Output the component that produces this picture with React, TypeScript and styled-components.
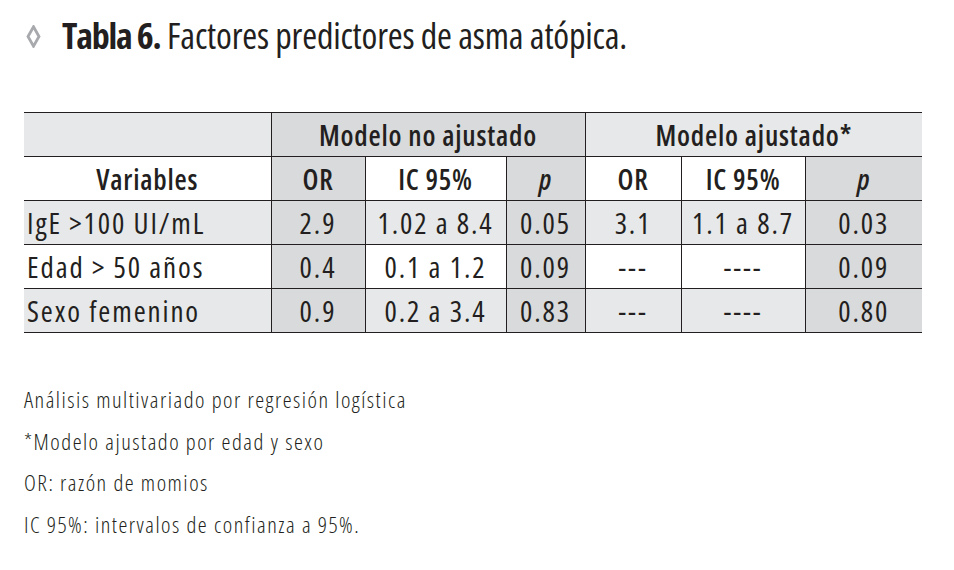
import React from "react";
import styled, { createGlobalStyle } from "styled-components";

const GlobalStyle = createGlobalStyle`
  html, body {
    margin: 0;
    padding: 0;
    background: #ffffff;
  }
  body {
    font-family: "Open Sans", "DejaVu Sans Condensed", sans-serif;
    font-stretch: 75%;
    color: #231f20;
  }
`;

const Page = styled.div`
  width: 954px;
  height: 570px;
  box-sizing: border-box;
  padding-top: 16px;
  display: flex;
  flex-direction: column;
  overflow: hidden;
`;

const TitleRow = styled.div`
  display: flex;
  align-items: center;
  gap: 21px;
  padding-left: 26px;
  height: 40px;
`;

const Diamond = styled.svg`
  width: 15px;
  height: 23px;
  flex: none;
`;

const Title = styled.h1`
  margin: 0;
  font-size: 36px;
  font-stretch: 75%;
  line-height: 40px;
  font-weight: 400;
  letter-spacing: -0.2px;
  color: #231f20;
`;

const TitleStrong = styled.span`
  font-weight: 700;
  letter-spacing: -1.2px;
`;

const Table = styled.table`
  margin: 56px 0 0 24px;
  width: 898px;
  border-collapse: collapse;
  table-layout: fixed;
`;

const Col = styled.col<{ $w: number }>`
  width: ${(p) => p.$w}px;
`;

type Shade = "white" | "light" | "dark";

const shadeColor: Record<Shade, string> = {
  white: "#ffffff",
  light: "#e7e8e9",
  dark: "#d9dadb",
};

const Cell = styled.td<{ $shade: Shade; $left?: boolean; $head?: boolean; $italic?: boolean }>`
  height: 44px;
  padding: ${(p) => (p.$left ? "0 0 0 3px" : "0")};
  box-sizing: border-box;
  background: ${(p) => shadeColor[p.$shade]};
  text-align: ${(p) => (p.$left ? "left" : "center")};
  font-size: ${(p) => (p.$head ? "28px" : "29px")};
  font-style: ${(p) => (p.$italic ? "italic" : "normal")};
  font-weight: ${(p) => (p.$head ? 600 : 400)};
  font-stretch: 75%;
  letter-spacing: ${(p) => (p.$head ? "0.8px" : "1.9px")};
  color: #231f20;
  border: 1px solid #231f20;
  white-space: nowrap;
  vertical-align: middle;

  &:first-child {
    border-left: none;
  }
  &:last-child {
    border-right: none;
  }
`;

const Notes = styled.div`
  margin: 46px 0 0 24px;
  display: flex;
  flex-direction: column;
`;

const Note = styled.p`
  margin: 0;
  font-size: 22.5px;
  font-weight: 300;
  font-stretch: 75%;
  letter-spacing: 1.5px;
  line-height: 41.7px;
  color: #231f20;
`;

type Row = {
  label: string;
  shade: Shade;
  values: string[];
};

const rows: Row[] = [
  { label: "IgE >100 UI/mL", shade: "light", values: ["2.9", "1.02 a 8.4", "0.05", "3.1", "1.1 a 8.7", "0.03"] },
  { label: "Edad > 50 años", shade: "white", values: ["0.4", "0.1 a 1.2", "0.09", "---", "----", "0.09"] },
  { label: "Sexo femenino", shade: "light", values: ["0.9", "0.2 a 3.4", "0.83", "---", "----", "0.80"] },
];

// columns that are always the darker shade: OR (unadjusted), p, p
const darkCols = [0, 2, 5];

const widths = [247, 94, 141, 79, 96, 124, 117];

export default function App() {
  return (
    <>
      <GlobalStyle />
      <Page>
        <TitleRow>
          <Diamond viewBox="0 0 15 23" aria-hidden="true">
            <path d="M7.5 1.8 L13 11.5 L7.5 21.2 L2 11.5 Z" fill="none" stroke="#a7a9ac" strokeWidth="2.8" strokeLinejoin="miter" />
          </Diamond>
          <Title>
            <TitleStrong>Tabla 6.</TitleStrong> Factores predictores de asma atópica.
          </Title>
        </TitleRow>

        <Table>
          <colgroup>
            {widths.map((w, i) => (
              <Col key={i} $w={w} />
            ))}
          </colgroup>
          <thead>
            <tr>
              <Cell as="th" $shade="light" $head />
              <Cell as="th" $shade="dark" $head colSpan={3}>
                Modelo no ajustado
              </Cell>
              <Cell as="th" $shade="light" $head colSpan={3}>
                Modelo ajustado*
              </Cell>
            </tr>
            <tr>
              <Cell as="th" $shade="white" $head>
                Variables
              </Cell>
              <Cell as="th" $shade="dark" $head>OR</Cell>
              <Cell as="th" $shade="white" $head>IC 95%</Cell>
              <Cell as="th" $shade="dark" $head $italic>p</Cell>
              <Cell as="th" $shade="white" $head>OR</Cell>
              <Cell as="th" $shade="white" $head>IC 95%</Cell>
              <Cell as="th" $shade="dark" $head $italic>p</Cell>
            </tr>
          </thead>
          <tbody>
            {rows.map((r) => (
              <tr key={r.label}>
                <Cell $shade={r.shade} $left>
                  {r.label}
                </Cell>
                {r.values.map((v, i) => (
                  <Cell key={i} $shade={darkCols.includes(i) ? "dark" : r.shade}>
                    {v}
                  </Cell>
                ))}
              </tr>
            ))}
          </tbody>
        </Table>

        <Notes>
          <Note>Análisis multivariado por regresión logística</Note>
          <Note>*Modelo ajustado por edad y sexo</Note>
          <Note>OR: razón de momios</Note>
          <Note>IC 95%: intervalos de confianza a 95%.</Note>
        </Notes>
      </Page>
    </>
  );
}
